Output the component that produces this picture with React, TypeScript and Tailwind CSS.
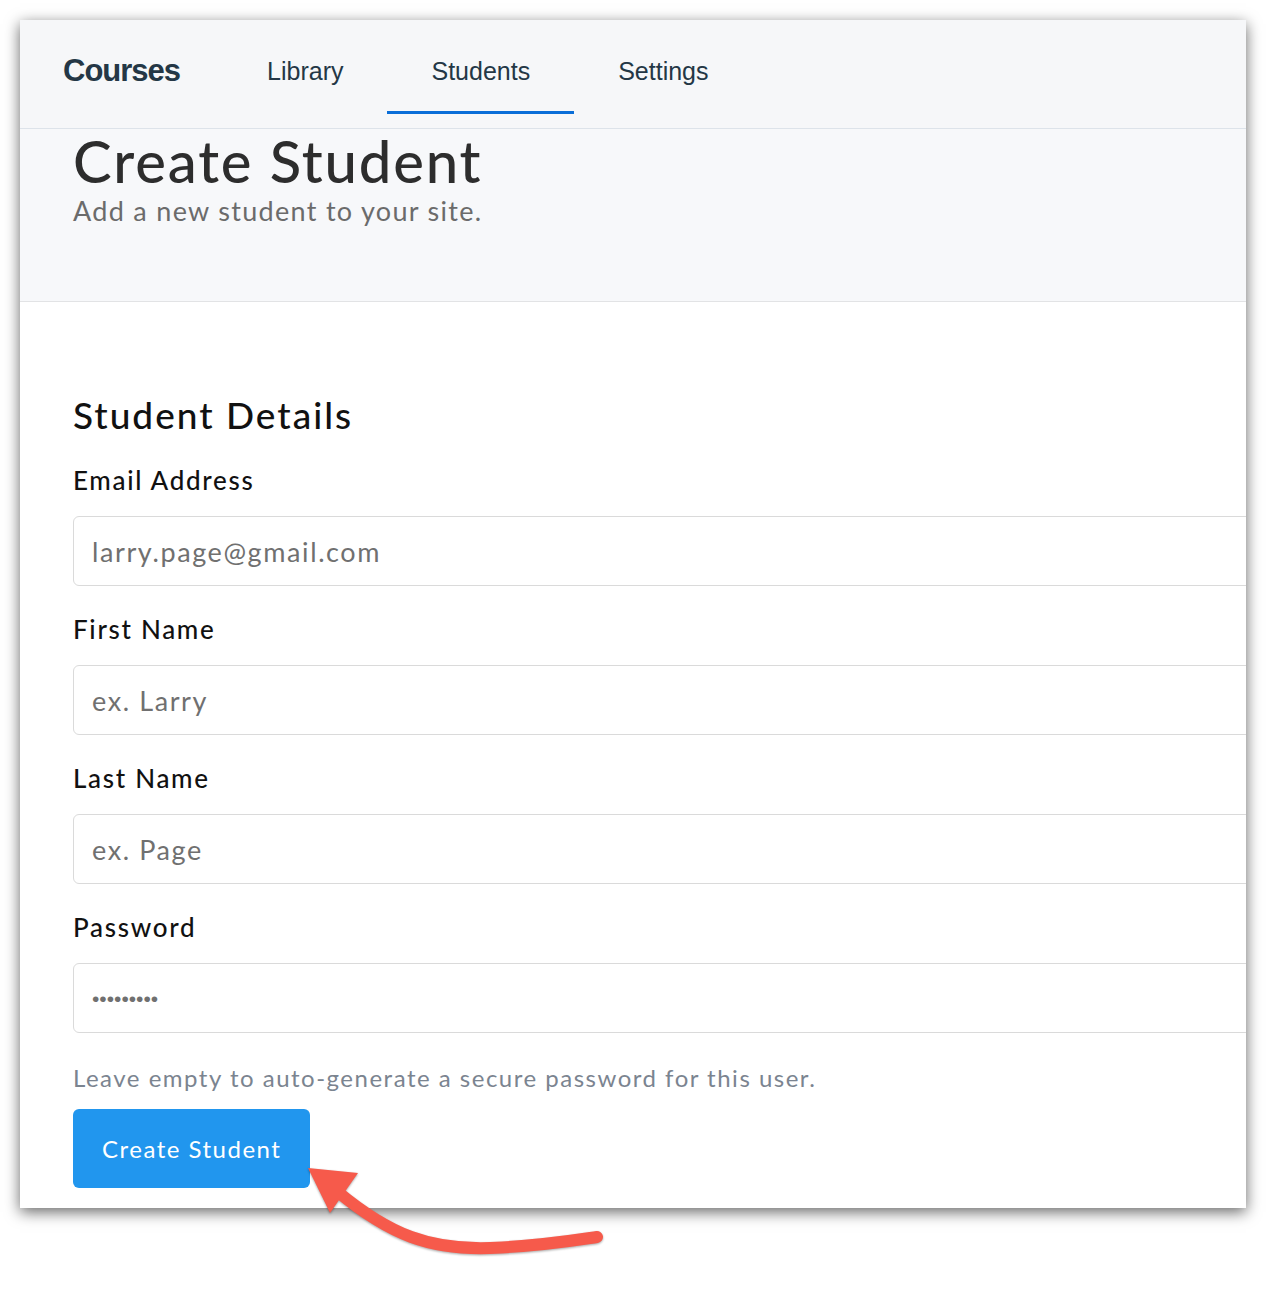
const navFont = { fontFamily: '"Liberation Sans", Arial, sans-serif' };

const tabs = [
  { label: "Library", active: false },
  { label: "Students", active: true },
  { label: "Settings", active: false },
];

const fields = [
  { label: "Email Address", placeholder: "larry.page@gmail.com", type: "email" },
  { label: "First Name", placeholder: "ex. Larry", type: "text" },
  { label: "Last Name", placeholder: "ex. Page", type: "text" },
];

function Arrow() {
  return (
    <svg
      className="pointer-events-none absolute left-0 top-0 drop-shadow-[0_1px_1px_rgba(0,0,0,0.35)]"
      width="1266"
      height="1302"
      viewBox="0 0 1266 1302"
    >
      <path
        d="M338 1192 C390 1235 430 1250 490 1248 C540 1246 570 1241 597 1237"
        fill="none"
        stroke="#f65a4b"
        strokeWidth="12"
        strokeLinecap="round"
      />
      <polygon points="308,1168 358,1173 330,1213" fill="#f65a4b" />
    </svg>
  );
}

export default function App() {
  return (
    <div className="relative h-[1302px] w-[1266px] bg-white pl-[20px] pt-[20px] font-['Lato',sans-serif]">
      <div className="h-[1188px] w-[1226px] overflow-hidden bg-white shadow-[0_4px_14px_rgba(0,0,0,0.6)]">
        <nav className="flex h-[109px] items-start border-b border-[#dde3ea] bg-[#f6f7f9] pl-[43px]" style={navFont}>
          <div className="pt-[37px] text-[31px] font-bold leading-[28px] tracking-[-1px] text-[#243746]">Courses</div>
          <div className="ml-[43px] flex">
            {tabs.map((tab) => (
              <div
                key={tab.label}
                className={
                  tab.active
                    ? "border-b-[3px] border-[#0a6ed8] px-[44px] pb-[26px] pt-[37px] text-[25px] leading-[28px] text-[#243746]"
                    : "border-b-[3px] border-transparent px-[44px] pb-[26px] pt-[37px] text-[25px] leading-[28px] text-[#243746]"
                }
              >
                {tab.label}
              </div>
            ))}
          </div>
        </nav>

        <header className="h-[173px] border-b border-[#e2e3e5] bg-[#f7f8fa] pl-[53px] pt-[3px]">
          <h1 className="text-[58px] font-medium leading-[58px] tracking-[1.8px] text-[#2d2d2d]">Create Student</h1>
          <p className="mt-[6px] text-[27px] leading-[30px] tracking-[1.3px] text-[#6b6b6b]">Add a new student to your site.</p>
        </header>

        <section className="pl-[53px] pt-[91px]">
          <h2 className="text-[37px] font-medium leading-[44px] tracking-[2px] text-[#111111]">Student Details</h2>
          {fields.map((field) => (
            <div key={field.label} className="mt-[28px]">
              <label className="block text-[26px] font-medium leading-[30px] tracking-[1.7px] text-[#111111]">{field.label}</label>
              <input
                type={field.type}
                placeholder={field.placeholder}
                className="mt-[21px] block h-[70px] w-[1220px] rounded-[6px] border border-[#dadada] bg-white pl-[18px] text-[27px] tracking-[1.6px] text-[#707070] outline-none placeholder:text-[#707070]"
              />
            </div>
          ))}
          <div className="mt-[28px]">
            <label className="block text-[26px] font-medium leading-[30px] tracking-[1.7px] text-[#111111]">Password</label>
            <div className="mt-[21px] flex h-[70px] w-[1220px] items-center rounded-[6px] border border-[#dadada] bg-white pl-[18px]">
              <span className="text-[21px] leading-none text-[#707070]" style={navFont}>•••••••••</span>
            </div>
          </div>
          <p className="mt-[31px] text-[24px] leading-[28px] tracking-[1.5px] text-[#7b8490]">
            Leave empty to auto-generate a secure password for this user.
          </p>
          <button className="mt-[17px] h-[79px] rounded-[6px] bg-[#2196ee] px-[29px] text-[24px] tracking-[1.5px] text-white">
            Create Student
          </button>
        </section>
      </div>
      <Arrow />
    </div>
  );
}
